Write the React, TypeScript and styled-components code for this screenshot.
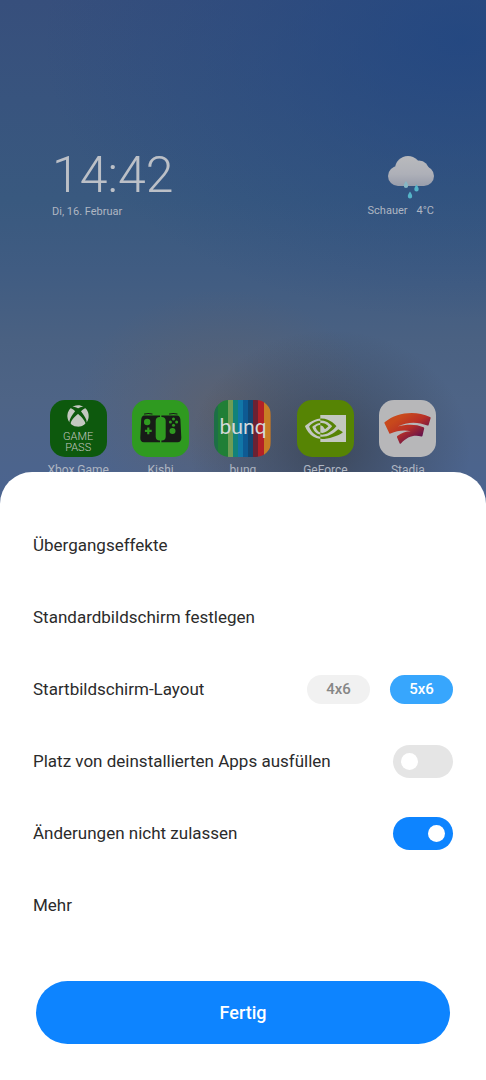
import React, { useState } from 'react';
import styled, { createGlobalStyle } from 'styled-components';
import { FaXbox } from 'react-icons/fa';
import { SiNvidia } from 'react-icons/si';

const GlobalStyle = createGlobalStyle`
  *, *::before, *::after { box-sizing: border-box; }
  body {
    margin: 0;
    font-family: Roboto, "Liberation Sans", sans-serif;
    color: #2b2b2b;
  }
  button, input { font: inherit; }
`;

const Screen = styled.div`
  display: flex;
  flex-direction: column;
  min-height: 100vh;
  background:
    radial-gradient(ellipse 140px 120px at 68% 450px, rgba(56, 64, 78, 0.75), rgba(56, 64, 78, 0.35) 50%, rgba(56, 64, 78, 0) 100%),
    radial-gradient(ellipse 150px 120px at 46% 410px, rgba(96, 96, 104, 0.75), rgba(96, 96, 104, 0.3) 50%, rgba(96, 96, 104, 0) 100%),
    radial-gradient(ellipse 420px 280px at 95% 40px, rgba(32, 70, 130, 0.8), rgba(32, 70, 130, 0.35) 50%, rgba(32, 70, 130, 0) 100%),
    linear-gradient(180deg, #374f7c 0, #38547e 100px, #39597f 200px, #405c82 270px, #4a6182 340px, #4e6486 400px, #4b6490 500px);
`;

const Home = styled.main`
  display: flex;
  flex-direction: column;
  color: #afb6c2;
`;

const Widgets = styled.section`
  display: flex;
  justify-content: space-between;
  align-items: flex-start;
  height: 400px;
  padding: 148px 52px 0;
`;

const ClockWidget = styled.div`
  display: flex;
  flex-direction: column;
`;

const Time = styled.time`
  font-weight: 300;
  font-size: 50px;
  line-height: 54px;
  color: #bcc0c7;
`;

const Caption = styled.span`
  font-size: 11px;
  line-height: 20px;
`;

const WeatherWidget = styled.div`
  display: flex;
  flex-direction: column;
  align-items: flex-end;
  padding-top: 7px;

  svg { display: block; }
`;

const WeatherText = styled.div`
  display: flex;
  gap: 9px;
`;

const Apps = styled.nav`
  display: grid;
  grid-template-columns: repeat(5, 1fr);
  padding: 0 37px;
`;

const AppButton = styled.button`
  display: flex;
  flex-direction: column;
  align-items: center;
  gap: 4px;
  padding: 0;
  border: 0;
  background: none;
  color: inherit;
  font-size: 12px;
  line-height: 18px;
  white-space: nowrap;
`;

const Tile = styled.span<{ $color: string }>`
  display: flex;
  flex-direction: column;
  align-items: center;
  justify-content: center;
  width: 57px;
  height: 57px;
  border-radius: 15px;
  overflow: hidden;
  background: ${(p) => p.$color};
  color: #c3c8c0;

  svg { flex: none; }
`;

const PassText = styled.span`
  margin-top: 4px;
  font-size: 11px;
  font-weight: 300;
  line-height: 11px;
  text-align: center;
`;

const BunqText = styled.span`
  padding-bottom: 5px;
  font-family: Lato, sans-serif;
  font-size: 21px;
  line-height: 26px;
  color: #d5d9da;
`;

const Sheet = styled.section`
  position: relative;
  flex: 1;
  display: flex;
  flex-direction: column;
  margin-top: -7px;
  padding: 37px 0 36px;
  border-radius: 32px 32px 0 0;
  background: #ffffff;
`;

const Options = styled.ul`
  flex: 1;
  margin: 0;
  padding: 0;
  list-style: none;
`;

const Row = styled.li`
  display: flex;
  align-items: center;
  justify-content: space-between;
  height: 72px;
  padding: 0 33px;
  font-size: 17px;
  line-height: 24px;
`;

const RowButton = styled.button`
  flex: 1;
  height: 100%;
  padding: 0;
  border: 0;
  background: none;
  color: inherit;
  text-align: left;
`;

const Choices = styled.div`
  display: flex;
  gap: 20px;
`;

const Choice = styled.label<{ $active: boolean }>`
  position: relative;
  display: flex;
  align-items: center;
  justify-content: center;
  width: 63px;
  height: 29px;
  border-radius: 15px;
  font-size: 15px;
  font-weight: 500;
  background: ${(p) => (p.$active ? '#37a6fd' : '#f1f1f1')};
  color: ${(p) => (p.$active ? '#ffffff' : '#868686')};

  input {
    position: absolute;
    inset: 0;
    margin: 0;
    appearance: none;
    border-radius: inherit;
  }
`;

const Switch = styled.input`
  display: flex;
  align-items: center;
  width: 60px;
  height: 33px;
  margin: 0;
  padding: 0 8px;
  appearance: none;
  border-radius: 17px;
  background: #e5e5e5;

  &::before {
    content: '';
    width: 17px;
    height: 17px;
    border-radius: 50%;
    background: #ffffff;
  }

  &:checked {
    justify-content: flex-end;
    background: #0d84ff;
  }
`;

const DoneButton = styled.button`
  height: 63px;
  margin: 40px 36px 0;
  border: 0;
  border-radius: 32px;
  background: #0d84ff;
  color: #ffffff;
  font-size: 18px;
  font-weight: 500;
`;

const RainCloud = () => (
  <svg width="46" height="46" viewBox="0 0 46 46" aria-hidden="true">
    <defs>
      <linearGradient id="cloud" gradientUnits="userSpaceOnUse" x1="0" y1="1" x2="0" y2="31">
        <stop offset="0" stopColor="#b9babd" />
        <stop offset="0.6" stopColor="#aeb0b8" />
        <stop offset="1" stopColor="#989dab" />
      </linearGradient>
    </defs>
    <g fill="url(#cloud)">
      <circle cx="10" cy="21" r="10" />
      <circle cx="20" cy="14" r="13" />
      <circle cx="31" cy="15.500" r="10" />
      <circle cx="36" cy="21" r="10" />
      <rect x="10" y="15" width="26" height="16" />
    </g>
    <path fill="#86b7c5" d="M18 26c1.500 2.300 2.200 3.600 2.200 4.700a2.200 2.200 0 0 1-4.400 0c0-1.100.7-2.400 2.200-4.700z" />
    <path fill="#55b4c8" d="M28.500 29.500c1.500 2.300 2.200 3.600 2.200 4.700a2.200 2.200 0 0 1-4.400 0c0-1.100.7-2.400 2.200-4.700z" />
    <path fill="#55b4c8" d="M22 36.500c1.500 2.300 2.200 3.600 2.200 4.700a2.200 2.200 0 0 1-4.400 0c0-1.100.7-2.400 2.200-4.700z" />
  </svg>
);

const KishiLogo = () => (
  <svg width="57" height="57" viewBox="0 0 57 57" aria-hidden="true">
    <path
      fill="#171c17"
      d="M12.500 15.500h32.500c2.200 0 3.200 1.700 3.400 4l.9 18c.2 3.200-1.200 4.800-3.800 4.800H12c-2.600 0-3.900-1.600-3.700-4.800l.9-18c.2-2.300 1.100-4 3.300-4z"
    />
    <path stroke="#171c17" strokeWidth="1.200" strokeLinecap="round" fill="none" d="M12.500 14q4-1 7.500 0M37.500 14q4-1 7.500 0" />
    <g fill="#2f9a20">
      <rect x="28" y="14" width="1.400" height="30" />
      <rect x="23.700" y="17" width="10" height="23.500" rx="4" />
      <circle cx="15.200" cy="22" r="3.200" />
      <circle cx="40.500" cy="31" r="3" />
      <path d="M15.200 27.500h2.200v2.300h2.300v2.200h-2.300v2.300h-2.200V32h-2.300v-2.200h2.300z" />
      <circle cx="41.500" cy="19" r="1.500" />
      <circle cx="41.500" cy="25.200" r="1.500" />
      <circle cx="38.400" cy="22.100" r="1.500" />
      <circle cx="44.600" cy="22.100" r="1.500" />
    </g>
  </svg>
);

const StadiaLogo = () => (
  <svg width="57" height="57" viewBox="0 0 57 57" aria-hidden="true">
    <defs>
      <linearGradient id="stadia" gradientUnits="userSpaceOnUse" x1="20" y1="18" x2="36" y2="42">
        <stop offset="0" stopColor="#c8491c" />
        <stop offset="0.45" stopColor="#b93026" />
        <stop offset="1" stopColor="#5c0f50" />
      </linearGradient>
    </defs>
    <path
      fill="url(#stadia)"
      d="M5.500 23.200c-.3-.5-.1-1 .4-1.300C18 12.500 36 10 51 17c.6.300.8.700.6 1.300l-2 6.800c-.2.500-.6.600-1.100.4C39 21.500 28 21.500 18.500 26.600c9-2.600 18.500-2.600 26 .6.600.2.800.6.700 1.200l-1.700 7.300c-.1.600-.5.800-1.100.7-8-1.700-14 .2-20.500 7-.5.500-1 .4-1.300-.2L18 37.200c-.2-.5-.1-.9.300-1.200 4-3.200 8.500-4.800 13.500-4.800-7-1.400-13.800-.6-20.300 2.400-.6.300-1 .1-1.200-.4z"
    />
  </svg>
);

const bunqStripes =
  'linear-gradient(90deg, #1d6f45 0 4px, #207f36 4px 14px, #6f9d55 14px 19px, #12827a 19px 24px, #1177a8 24px 29px, #0e5a93 29px 34px, #124672 34px 39px, #6b2233 39px 44px, #b32126 44px 50px, #c87d25 50px 56px, #9a6b3c 56px)';

const apps = [
  {
    name: 'Xbox Game',
    color: '#0d590d',
    art: (
      <>
        <FaXbox size={22} aria-hidden="true" />
        <PassText>
          GAME
          <br />
          PASS
        </PassText>
      </>
    ),
  },
  { name: 'Kishi', color: '#2f9a20', art: <KishiLogo /> },
  { name: 'bunq', color: bunqStripes, art: <BunqText>bunq</BunqText> },
  { name: 'GeForce', color: '#568404', art: <SiNvidia size={41} aria-hidden="true" /> },
  { name: 'Stadia', color: '#b7b7b9', art: <StadiaLogo /> },
];

const layouts = ['4x6', '5x6'];

export default function App() {
  const [layout, setLayout] = useState('5x6');
  const [fill, setFill] = useState(false);
  const [locked, setLocked] = useState(true);

  return (
    <>
      <GlobalStyle />
      <Screen>
        <Home>
          <Widgets>
            <ClockWidget>
              <Time>14:42</Time>
              <Caption>Di, 16. Februar</Caption>
            </ClockWidget>
            <WeatherWidget>
              <RainCloud />
              <WeatherText>
                <Caption>Schauer</Caption>
                <Caption>4°C</Caption>
              </WeatherText>
            </WeatherWidget>
          </Widgets>
          <Apps>
            {apps.map((app) => (
              <AppButton key={app.name} type="button">
                <Tile $color={app.color}>{app.art}</Tile>
                {app.name}
              </AppButton>
            ))}
          </Apps>
        </Home>
        <Sheet>
          <Options>
            <Row>
              <RowButton type="button">Übergangseffekte</RowButton>
            </Row>
            <Row>
              <RowButton type="button">Standardbildschirm festlegen</RowButton>
            </Row>
            <Row>
              <span id="layout-label">Startbildschirm-Layout</span>
              <Choices role="radiogroup" aria-labelledby="layout-label">
                {layouts.map((name) => (
                  <Choice key={name} $active={layout === name}>
                    <input
                      type="radio"
                      name="layout"
                      value={name}
                      checked={layout === name}
                      onChange={() => setLayout(name)}
                    />
                    {name}
                  </Choice>
                ))}
              </Choices>
            </Row>
            <Row>
              <label htmlFor="fill">Platz von deinstallierten Apps ausfüllen</label>
              <Switch
                id="fill"
                type="checkbox"
                role="switch"
                checked={fill}
                onChange={(e) => setFill(e.target.checked)}
              />
            </Row>
            <Row>
              <label htmlFor="locked">Änderungen nicht zulassen</label>
              <Switch
                id="locked"
                type="checkbox"
                role="switch"
                checked={locked}
                onChange={(e) => setLocked(e.target.checked)}
              />
            </Row>
            <Row>
              <RowButton type="button">Mehr</RowButton>
            </Row>
          </Options>
          <DoneButton type="button">Fertig</DoneButton>
        </Sheet>
      </Screen>
    </>
  );
}
